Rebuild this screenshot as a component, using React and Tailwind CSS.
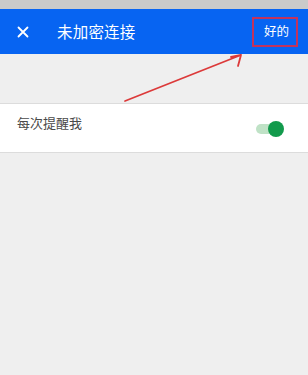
import React from 'react';

export default function App() {
  return (
    <div className="relative h-[375px] w-[308px] overflow-hidden bg-[#efefef]" style={{ fontFamily: '"Noto Sans CJK SC", "Noto Sans", sans-serif' }}>
      <div className="h-[9px] bg-[#cacaca]" />
      <header className="flex h-[45px] items-center bg-[#0764f2] text-white">
        <div className="flex w-[44px] justify-center pl-[1px]">
          <svg width="12" height="12" viewBox="0 0 12 12" fill="none" stroke="white" strokeWidth="1.8" strokeLinecap="round">
            <path d="M1.5 1.5l9 9M10.5 1.5l-9 9" />
          </svg>
        </div>
        <h1 className="ml-[13px] text-[15.5px] leading-none tracking-[0.2px]">未加密连接</h1>
        <div className="ml-auto mr-[19px] text-[12.5px] leading-none">好的</div>
      </header>

      <div className="h-[49px]" />

      <div className="flex h-[50px] items-start justify-between border-y border-[#dcdcdc] bg-white">
        <span className="ml-[17px] mt-[10px] text-[13px] leading-[18px] text-[#4a4a4a]">每次提醒我</span>
        <div className="relative mr-[24px] mt-[17px] h-[16px] w-[28px]">
          <div className="absolute left-0 top-[3px] h-[10px] w-[24px] rounded-full bg-[#bfe2c6]" />
          <div className="absolute right-0 top-0 h-[16px] w-[16px] rounded-full bg-[#129a4c]" />
        </div>
      </div>

      <div className="pointer-events-none absolute left-[252px] top-[17px] h-[30px] w-[46px] border-2 border-[#c2335d]" />
      <svg className="pointer-events-none absolute left-0 top-0" width="308" height="375" fill="none" stroke="#dc3a3a" strokeWidth="1.8" strokeLinecap="round">
        <path d="M125 101L241 55M241 55L231 57M241 55L238 66" />
      </svg>
    </div>
  );
}
